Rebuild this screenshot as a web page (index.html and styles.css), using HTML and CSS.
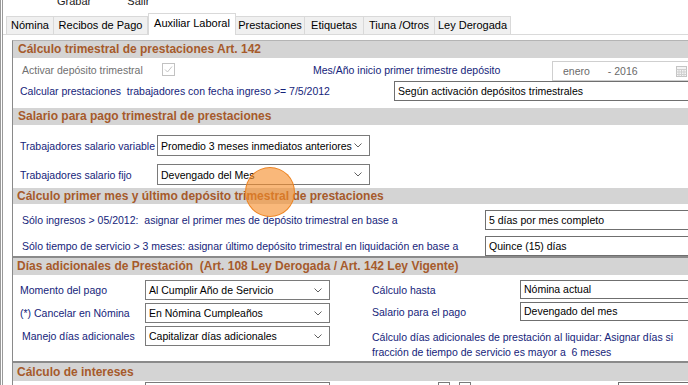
FILE: index.html
```html
<!DOCTYPE html>
<html lang="es">
<head>
  <meta charset="UTF-8" />
  <title>Auxiliar Laboral</title>
  <link rel="stylesheet" href="styles.css">
</head>
<body>
  <div class="window">
    <div class="toolbar">
      <span class="tool tool-grabar">Grabar</span>
      <span class="tool tool-salir">Salir</span>
    </div>

    <div class="tabs">
      <div class="tab w-nomina">Nómina</div>
      <div class="tab w-recibos">Recibos de Pago</div>
      <div class="tab tab-active w-auxiliar">Auxiliar Laboral</div>
      <div class="tab w-prest">Prestaciones</div>
      <div class="tab w-etiq">Etiquetas</div>
      <div class="tab w-tiuna">Tiuna /Otros</div>
      <div class="tab w-ley">Ley Derogada</div>
    </div>

    <div class="sheet">
      <!-- Panel trimestral -->
      <div class="panel panel-a">
        <div class="band">Cálculo trimestral de prestaciones Art. 142</div>

        <div class="row row-activar">
          <span class="lbl muted w-activar">Activar depósito trimestral</span>
          <span class="check">
            <svg width="13" height="13" viewBox="0 0 13 13"><polyline points="3,6.5 5.5,9 10,3.5" fill="none" stroke="#c4c4c4" stroke-width="1"/></svg>
          </span>
          <span class="lbl w-mes">Mes/Año inicio primer trimestre depósito</span>
          <div class="datebox">
            <span class="date-mes">enero</span>
            <span class="date-anio">- 2016</span>
            <svg class="cal" width="11" height="11" viewBox="0 0 11 11">
              <rect x="0.5" y="0.5" width="10" height="10" fill="#f4f4f4" stroke="#c4c4c4"/>
              <path d="M0.5 3.5H10.5M0.5 6H10.5M0.5 8.5H10.5M3 3.5V10.5M5.5 3.5V10.5M8 3.5V10.5" stroke="#cfcfcf" stroke-width="1"/>
            </svg>
          </div>
        </div>

        <div class="row row-calc">
          <span class="lbl w-calc">Calcular prestaciones&nbsp; trabajadores con fecha ingreso &gt;= 7/5/2012</span>
          <div class="textbox w-segun">Según activación depósitos trimestrales</div>
        </div>

        <div class="band band-2">Salario para pago trimestral de prestaciones</div>

        <div class="row row-sel first">
          <span class="lbl w-trab">Trabajadores salario variable</span>
          <div class="combo w-combo-a">
            <span>Promedio 3 meses inmediatos anteriores</span>
            <svg width="8" height="5" viewBox="0 0 8 5"><polyline points="0.5,0.5 4,4 7.5,0.5" fill="none" stroke="#606060"/></svg>
          </div>
        </div>
        <div class="row row-sel second">
          <span class="lbl w-trab">Trabajadores salario fijo</span>
          <div class="combo w-combo-a">
            <span>Devengado del Mes</span>
            <svg width="8" height="5" viewBox="0 0 8 5"><polyline points="0.5,0.5 4,4 7.5,0.5" fill="none" stroke="#606060"/></svg>
          </div>
        </div>

        <div class="band band-3">Cálculo primer mes y último depósito trimestral de prestaciones</div>

        <div class="row row-base">
          <span class="lbl w-base">Sólo ingresos &gt; 05/2012:&nbsp; asignar el primer mes de depósito trimestral en base a</span>
          <div class="textbox w-dias">5 días por mes completo</div>
        </div>
        <div class="row row-base">
          <span class="lbl w-base">Sólo tiempo de servicio &gt; 3 meses: asignar último depósito trimestral en liquidación en base a</span>
          <div class="textbox w-dias">Quince (15) días</div>
        </div>
      </div>

      <!-- Panel dias adicionales -->
      <div class="panel panel-b">
        <div class="band band-4">Días adicionales de Prestación&nbsp; (Art. 108 Ley Derogada / Art. 142 Ley Vigente)</div>
        <div class="split">
          <div class="col-left">
            <div class="row row-b">
              <span class="lbl w-left">Momento del pago</span>
              <div class="combo w-combo-b">
                <span>Al Cumplir Año de Servicio</span>
                <svg width="8" height="5" viewBox="0 0 8 5"><polyline points="0.5,0.5 4,4 7.5,0.5" fill="none" stroke="#606060"/></svg>
              </div>
            </div>
            <div class="row row-b">
              <span class="lbl w-left">(*) Cancelar en Nómina</span>
              <div class="combo w-combo-b">
                <span>En Nómina Cumpleaños</span>
                <svg width="8" height="5" viewBox="0 0 8 5"><polyline points="0.5,0.5 4,4 7.5,0.5" fill="none" stroke="#606060"/></svg>
              </div>
            </div>
            <div class="row row-b">
              <span class="lbl w-left indent">Manejo días adicionales</span>
              <div class="combo w-combo-b">
                <span>Capitalizar días adicionales</span>
                <svg width="8" height="5" viewBox="0 0 8 5"><polyline points="0.5,0.5 4,4 7.5,0.5" fill="none" stroke="#606060"/></svg>
              </div>
            </div>
          </div>
          <div class="col-right">
            <div class="row row-b">
              <span class="lbl w-right">Cálculo hasta</span>
              <div class="textbox w-hasta">Nómina actual</div>
            </div>
            <div class="row row-b">
              <span class="lbl w-right">Salario para el pago</span>
              <div class="textbox w-hasta">Devengado del mes</div>
            </div>
            <p class="note">Cálculo días adicionales de prestación al liquidar: Asignar días si<br>fracción de tiempo de servicio es mayor a&nbsp; 6 meses</p>
          </div>
        </div>
      </div>

      <!-- Panel intereses -->
      <div class="panel panel-c">
        <div class="band band-5">Cálculo de intereses</div>
        <div class="row row-int">
          <div class="combo w-combo-b"></div>
          <div class="mini mini-1"></div>
          <div class="mini mini-2"></div>
          <div class="textbox w-int"></div>
        </div>
      </div>
    </div>
  </div>

  <div class="cursor-dot"></div>
</body>
</html>
```

FILE: styles.css
```css
html, body {
  margin: 0;
  padding: 0;
  overflow: hidden;
  width: 100%;
  height: 100%;
  background: #fff;
  font-family: "Liberation Sans", Arial, sans-serif;
  font-size: 10.5px;
  color: #000;
}

.window {
  height: 100%;
  border-left: 3px double #9a9a9a;
  box-sizing: border-box;
}

/* barra superior, cortada */
.toolbar {
  height: 13px;
  overflow: hidden;
  font-size: 11px;
  line-height: 12px;
  white-space: nowrap;
}

.tool {
  display: inline-block;
  margin-top: -5px;
  vertical-align: top;
  color: #222;
}

.tool-grabar { margin-left: 54px; }
.tool-salir { margin-left: 33px; }

/* pestañas */
.tabs {
  display: flex;
  align-items: flex-end;
  height: 21px;
  padding-left: 3px;
  border-bottom: 1px solid #dadada;
}

.tab {
  box-sizing: border-box;
  height: 18px;
  line-height: 17px;
  font-size: 11px;
  text-align: center;
  background: #f0f0f0;
  border: 1px solid #d9d9d9;
  border-bottom: none;
  border-left: none;
  white-space: nowrap;
}

.tab:first-child { border-left: 1px solid #d9d9d9; }

.tab-active {
  height: 22px;
  line-height: 18px;
  margin-bottom: -1px;
  background: #fff;
  border-left: 1px solid #d9d9d9;
  position: relative;
}

.w-nomina { width: 48px; }
.w-recibos { width: 94px; }
.w-auxiliar { width: 88px; }
.w-prest { width: 69px; }
.w-etiq { width: 59px; }
.w-tiuna { width: 71px; }
.w-ley { width: 76px; }

/* hoja */
.sheet {
  margin-top: 5px;
  margin-left: 9px;
  width: 760px;
}

.panel {
  border: 1px solid #8a8a8a;
  border-top-color: #a8a8a8;
}

.panel + .panel { border-top-color: #8a8a8a; margin-top: 0; }

.panel-a { border-top-color: #b4b4b4; }

.band {
  height: 17px;
  line-height: 17px;
  padding-left: 5px;
  background: #d4d4d4;
  color: #a65a2b;
  font-weight: bold;
  font-size: 12px;
  white-space: nowrap;
}

.band-2 { margin-top: 7px; }
.band-3 { margin-top: 3px; height: 16px; line-height: 16px; padding-left: 4px; }
.band-4 { padding-left: 4px; }
.band-5 { height: 18px; line-height: 18px; padding-left: 4px; }

.row {
  display: flex;
  align-items: center;
  white-space: nowrap;
}

.lbl {
  flex: none;
  color: #15247a;
}

.muted { color: #707070; }

/* fila activar */
.row-activar {
  height: 23px;
  padding-left: 9px;
}

.w-activar { width: 140px; }

.check {
  flex: none;
  width: 13px;
  height: 13px;
  box-sizing: border-box;
  border: 1px solid #c2c2c2;
  background: #fff;
  position: relative;
}

.check svg { position: absolute; left: -1px; top: -1px; }

.w-mes { margin-left: 138px; width: 239px; }

.datebox {
  flex: none;
  align-self: flex-end;
  display: flex;
  align-items: center;
  box-sizing: border-box;
  width: 150px;
  height: 20px;
  padding-left: 10px;
  border: 1px solid #cfcfcf;
  color: #6a6a6a;
}

.date-anio { margin-left: 18px; }
.cal { margin-left: 38px; }

.row-calc {
  height: 20px;
  padding-left: 7px;
}

.w-calc { width: 374px; }

.textbox {
  flex: none;
  box-sizing: border-box;
  height: 20px;
  line-height: 18px;
  padding-left: 3px;
  border: 1px solid #6f6f6f;
  background: #fff;
  white-space: nowrap;
  overflow: hidden;
}

.w-segun { width: 320px; }

.combo {
  flex: none;
  display: flex;
  align-items: center;
  justify-content: space-between;
  box-sizing: border-box;
  height: 21px;
  padding-left: 3px;
  padding-right: 7px;
  border: 1px solid #7a7a7a;
  background: #fff;
}

.row-sel { padding-left: 7px; }
.row-sel.first { margin-top: 10px; }
.row-sel.second { margin-top: 8px; }

.w-trab { width: 137px; }
.w-combo-a { width: 213px; }

.row-base {
  margin-top: 6px;
  padding-left: 9px;
}

.w-base { width: 463px; }
.w-dias { width: 240px; }

/* dias adicionales */
.split {
  display: flex;
}

.col-left {
  width: 317px;
  padding-bottom: 15px;
}

.col-right {
  margin-left: 42px;
}

.row-b {
  margin-top: 3px;
  padding-left: 7px;
}

.row-b:first-child { margin-top: 5px; }

.col-right .row-b { padding-left: 0; }

.w-left { width: 125px; }
.w-left.indent { padding-left: 2px; width: 123px; }
.w-combo-b { width: 185px; height: 20px; }

.w-right { width: 148px; }
.w-hasta { width: 220px; height: 19px; line-height: 17px; }

.note {
  margin: 9px 0 0;
  line-height: 15px;
  color: #15247a;
  white-space: nowrap;
}

/* intereses */
.row-int {
  margin-top: 1px;
  padding-left: 132px;
  align-items: flex-start;
}

.mini {
  flex: none;
  width: 12px;
  height: 20px;
  box-sizing: border-box;
  border: 1px solid #7a7a7a;
}

.mini-1 { margin-left: 108px; }
.mini-2 { margin-left: 9px; }
.w-int { margin-left: 147px; width: 200px; }

/* indicador del cursor */
.cursor-dot {
  position: absolute;
  left: 245px;
  top: 167px;
  width: 50px;
  height: 50px;
  box-sizing: border-box;
  border-radius: 50%;
  background: rgba(245, 140, 40, 0.62);
  border: 1.5px solid rgba(236, 130, 30, 0.95);
}
```
